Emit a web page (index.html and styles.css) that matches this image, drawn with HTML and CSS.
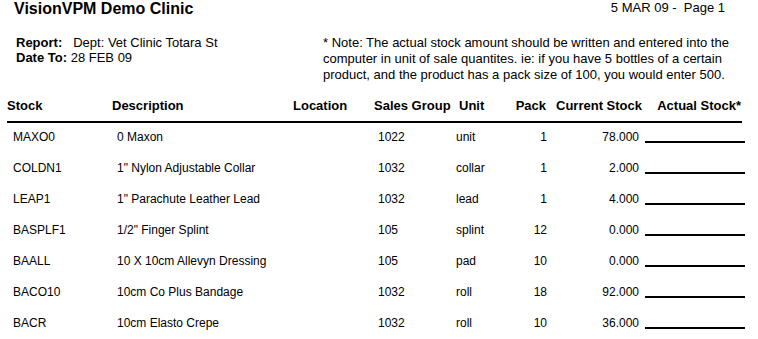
FILE: index.html
```html
<!DOCTYPE html>
<html>
<head>
<meta charset="utf-8">
<link rel="stylesheet" href="styles.css">
</head>
<body>
<div class="page">
  <div class="top">
    <div class="title">VisionVPM Demo Clinic</div>
    <div class="date">5 MAR 09 -&nbsp; Page 1</div>
  </div>
  <div class="info">
    <div class="report">
      <div><span class="lbl">Report:</span><span class="rep-val">Dept: Vet Clinic Totara St</span></div>
      <div><span class="lbl">Date To:</span> 28 FEB 09</div>
    </div>
    <div class="note">* Note: The actual stock amount should be written and entered into the computer in unit of sale quantites. ie: if you have 5 bottles of a certain product, and the product has a pack size of 100, you would enter 500.</div>
  </div>
  <div class="table">
    <div class="row head">
      <div class="c-stock">Stock</div>
      <div class="c-desc">Description</div>
      <div class="c-loc">Location</div>
      <div class="c-sg">Sales Group</div>
      <div class="c-unit">Unit</div>
      <div class="c-pack">Pack</div>
      <div class="c-cur">Current Stock</div>
      <div class="c-act">Actual Stock*</div>
    </div>
    <div class="row data">
      <div class="c-stock">MAXO0</div><div class="c-desc">0 Maxon</div><div class="c-loc"></div><div class="c-sg">1022</div><div class="c-unit">unit</div><div class="c-pack">1</div><div class="c-cur">78.000</div><div class="c-act"><div class="line"></div></div>
    </div>
    <div class="row data">
      <div class="c-stock">COLDN1</div><div class="c-desc">1" Nylon Adjustable Collar</div><div class="c-loc"></div><div class="c-sg">1032</div><div class="c-unit">collar</div><div class="c-pack">1</div><div class="c-cur">2.000</div><div class="c-act"><div class="line"></div></div>
    </div>
    <div class="row data">
      <div class="c-stock">LEAP1</div><div class="c-desc">1" Parachute Leather Lead</div><div class="c-loc"></div><div class="c-sg">1032</div><div class="c-unit">lead</div><div class="c-pack">1</div><div class="c-cur">4.000</div><div class="c-act"><div class="line"></div></div>
    </div>
    <div class="row data">
      <div class="c-stock">BASPLF1</div><div class="c-desc">1/2" Finger Splint</div><div class="c-loc"></div><div class="c-sg">105</div><div class="c-unit">splint</div><div class="c-pack">12</div><div class="c-cur">0.000</div><div class="c-act"><div class="line"></div></div>
    </div>
    <div class="row data">
      <div class="c-stock">BAALL</div><div class="c-desc">10 X 10cm Allevyn Dressing</div><div class="c-loc"></div><div class="c-sg">105</div><div class="c-unit">pad</div><div class="c-pack">10</div><div class="c-cur">0.000</div><div class="c-act"><div class="line"></div></div>
    </div>
    <div class="row data">
      <div class="c-stock">BACO10</div><div class="c-desc">10cm Co Plus Bandage</div><div class="c-loc"></div><div class="c-sg">1032</div><div class="c-unit">roll</div><div class="c-pack">18</div><div class="c-cur">92.000</div><div class="c-act"><div class="line"></div></div>
    </div>
    <div class="row data">
      <div class="c-stock">BACR</div><div class="c-desc">10cm Elasto Crepe</div><div class="c-loc"></div><div class="c-sg">1032</div><div class="c-unit">roll</div><div class="c-pack">10</div><div class="c-cur">36.000</div><div class="c-act"><div class="line"></div></div>
    </div>
  </div>
</div>
</body>
</html>
```

FILE: styles.css
```css
html, body {
  margin: 0;
  padding: 0;
  background: #fff;
}
body {
  font-family: "Liberation Sans", Arial, sans-serif;
  color: #000;
  width: 758px;
  height: 339px;
  overflow: hidden;
}
.page {
  width: 758px;
}
.top {
  display: flex;
  justify-content: space-between;
  align-items: flex-start;
  padding-left: 14px;
  padding-right: 33px;
}
.title {
  font-size: 16px;
  font-weight: bold;
  line-height: 18px;
}
.date {
  font-size: 13px;
  line-height: 15px;
}
.info {
  display: flex;
  align-items: flex-start;
  margin-top: 17px;
  padding-left: 16px;
  font-size: 13px;
}
.report {
  width: 307px;
  line-height: 15px;
}
.lbl {
  font-weight: bold;
}
.rep-val {
  margin-left: 11px;
}
.note {
  width: 412px;
  line-height: 15.75px;
}
.table {
  margin-top: 16px;
  margin-left: 7px;
  width: 738px;
}
.row {
  display: grid;
  grid-template-columns: 105px 181px 81px 82px 44px 50px 95px 100px;
}
.head {
  font-size: 13px;
  font-weight: bold;
  line-height: 15px;
  padding-bottom: 8px;
  border-bottom: 2px solid #000;
  width: 735px;
}
.data {
  font-size: 12px;
  line-height: 15px;
  height: 31px;
  box-sizing: border-box;
  padding-top: 7px;
}
.head .c-unit { padding-left: 3px; }
.head .c-pack { text-align: right; padding-right: 4px; }
.head .c-cur { text-align: right; padding-right: 3px; }
.head .c-act { text-align: right; padding-right: 4px; white-space: nowrap; }

.data .c-stock { padding-left: 6px; }
.data .c-desc { padding-left: 5px; }
.data .c-sg { padding-left: 4px; }
.data .c-pack { text-align: right; padding-right: 3px; }
.data .c-cur { text-align: right; padding-right: 6px; }
.line {
  height: 11px;
  border-bottom: 2px solid #000;
}
```
